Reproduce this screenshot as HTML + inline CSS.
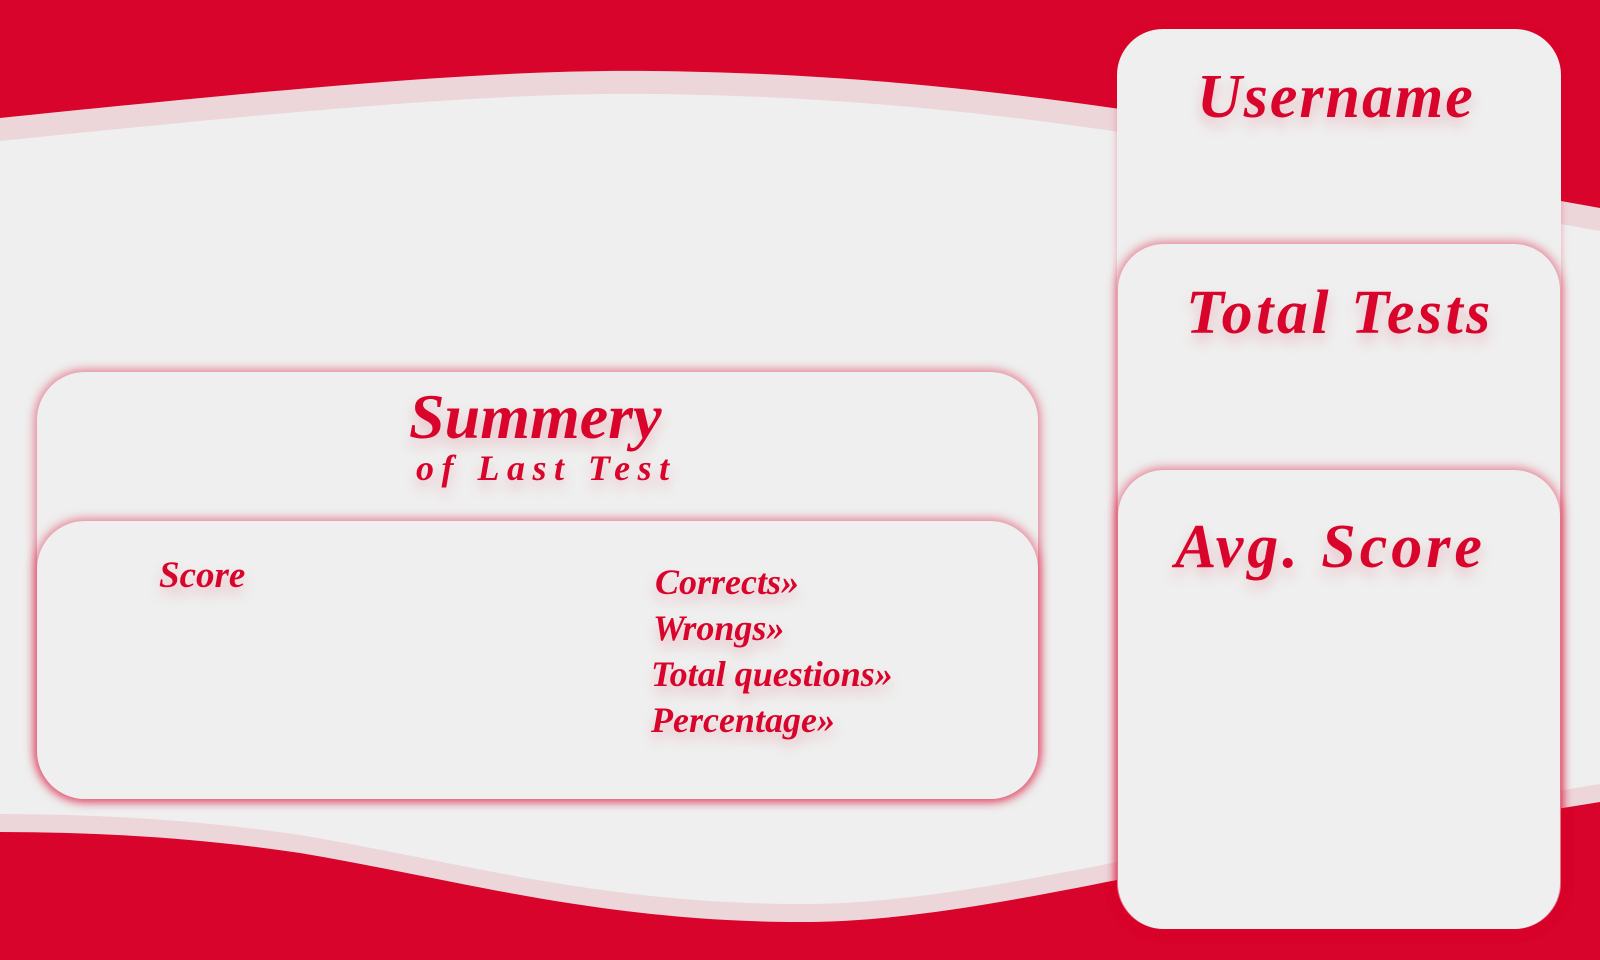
<!DOCTYPE html>
<html><head><meta charset="utf-8"><style>
html,body{margin:0;padding:0;width:1600px;height:960px;overflow:hidden;background:#d9042b;}
svg.bg{position:absolute;left:0;top:0}
.card{position:absolute;background:#efefef;border-radius:48px;box-shadow:0 0 10px 2px rgba(217,4,43,0.5);}
.t{position:absolute;font-family:"Liberation Serif",serif;font-style:italic;font-weight:bold;color:#d9042b;text-shadow:0 8px 14px rgba(217,4,43,0.22);white-space:nowrap;line-height:1;}
</style></head><body>
<svg class="bg" width="1600" height="960" viewBox="0 0 1600 960">
<path fill="#edd6da" d="M0,118 C300,87 500,69 650,71 C850,73 1000,92 1120,109 L1561,201 L1600,208 L1600,802 L1117,880 C1000,903 900,922 800,922 C600,922 450,878 300,853 C200,838 100,832 0,832 Z"/>
<path fill="#efefef" d="M0,141 C300,110 500,92 650,94 C850,96 1000,115 1120,132 L1561,224 L1600,231 L1600,784 L1117,862 C1000,885 900,904 800,904 C600,904 450,860 300,835 C200,820 100,814 0,814 Z"/>
</svg>
<div class="card" style="left:1117px;top:29px;width:444px;height:900px;border-radius:46px;box-shadow:0 0 8px rgba(217,4,43,0.3)"></div>
<div class="card" style="left:1118px;top:244px;width:442px;height:685px;border-radius:46px"></div>
<div class="card" style="left:1118px;top:470px;width:442px;height:459px;border-radius:46px"></div>
<div class="card" style="left:37px;top:372px;width:1001px;height:427px"></div>
<div class="card" style="left:37px;top:521px;width:1001px;height:278px"></div>
<div class="t" style="left:1197px;top:66px;font-size:62px;letter-spacing:2px">Username</div>
<div class="t" style="left:1186px;top:282px;font-size:62px;letter-spacing:3.5px">Total Tests</div>
<div class="t" style="left:1175px;top:516px;font-size:62px;letter-spacing:4px">Avg. Score</div>
<div class="t" style="left:409px;top:385px;font-size:64px">Summery</div>
<div class="t" style="left:416px;top:450px;font-size:36px;letter-spacing:7.5px">of Last Test</div>
<div class="t" style="left:159px;top:557px;font-size:37px">Score</div>
<div class="t" style="left:655px;top:564px;font-size:36px">Corrects»</div>
<div class="t" style="left:653px;top:610px;font-size:36px">Wrongs»</div>
<div class="t" style="left:651px;top:656px;font-size:36px">Total questions»</div>
<div class="t" style="left:651px;top:702px;font-size:36px">Percentage»</div>
</body></html>
